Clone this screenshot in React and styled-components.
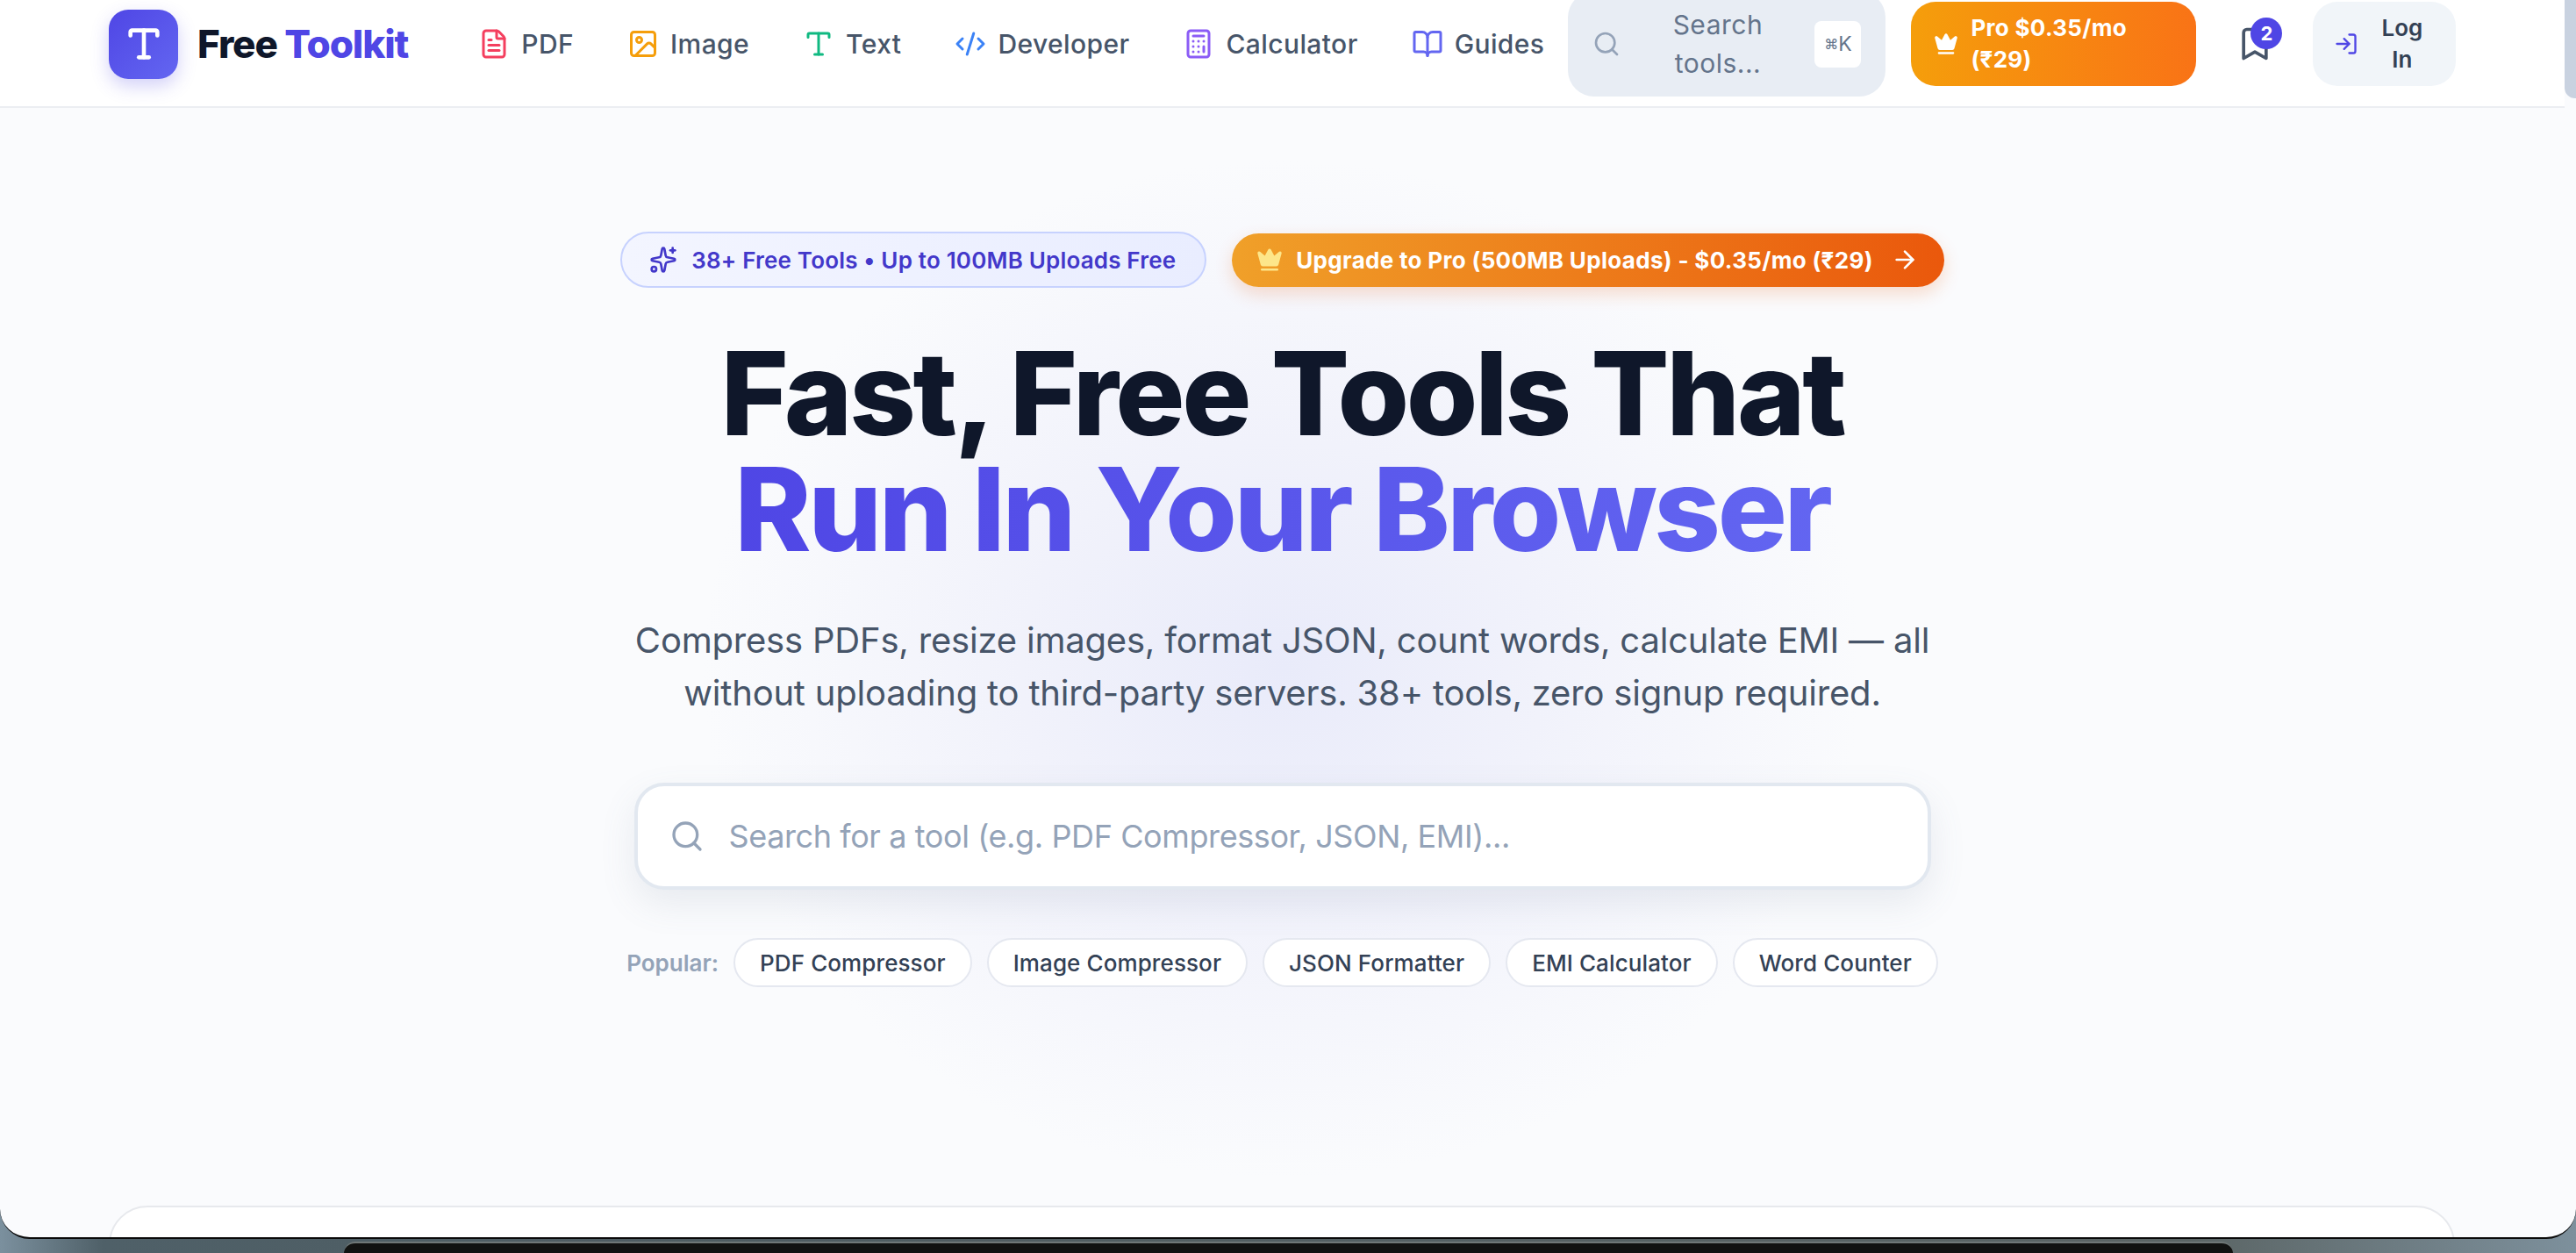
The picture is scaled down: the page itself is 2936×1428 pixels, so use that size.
import React from 'react'
import styled, { createGlobalStyle } from 'styled-components'
import {
  ArrowRight,
  BookOpen,
  Bookmark,
  Calculator,
  CodeXml,
  Crown,
  FileText,
  Image,
  LogIn,
  Search,
  Sparkles,
  Type,
} from 'lucide-react'

const GlobalStyle = createGlobalStyle`
  * { box-sizing: border-box; }
  html, body { margin: 0; padding: 0; }
  body {
    font-family: Inter, "Noto Sans", "DejaVu Sans", sans-serif;
    background: #5a6a70;
  }
`

const Desktop = styled.div`
  height: 1428px;
  overflow: hidden;
  background: linear-gradient(90deg, #7b909e 0%, #4f6068 4%, #4d5b60 30%, #5a6464 85%, #7d909c 100%);
`

const BrowserWindow = styled.div`
  display: flex;
  height: 1412px;
  overflow: hidden;
  background: #fafbfd;
  border-bottom: 2px solid #0a0a0a;
  border-radius: 0 0 34px 34px;
`

const Dock = styled.div`
  width: 2153px;
  height: 13px;
  margin: 3px 0 0 392px;
  background: #111211;
  border-top: 2px solid #6f7777;
  border-radius: 26px 26px 0 0;
`

const Content = styled.div`
  flex: 1;
  min-width: 0;
  display: flex;
  flex-direction: column;
`

const ScrollTrack = styled.div`
  width: 13px;
`

const ScrollThumb = styled.div`
  height: 112px;
  background: #c9d2e0;
  border-radius: 0 0 0 12px;
`

const Header = styled.header`
  height: 123px;
  flex-shrink: 0;
  padding: 0 125px 21px 124px;
  display: flex;
  align-items: center;
  background: #fff;
  border-bottom: 2px solid #eceef2;
`

const Brand = styled.a`
  display: flex;
  align-items: center;
  gap: 22px;
  margin-right: 80px;
`

const LogoMark = styled.div`
  width: 79px;
  height: 79px;
  border-radius: 22px;
  display: flex;
  align-items: center;
  justify-content: center;
  color: #fff;
  background: linear-gradient(135deg, #4f46e5, #6366f1);
  box-shadow: 0 8px 20px rgba(79, 70, 229, 0.25);
`

const BrandName = styled.span`
  font-size: 44px;
  font-weight: 800;
  letter-spacing: -1.1px;
  color: #0f172a;
  white-space: nowrap;
`

const BrandAccent = styled.span`
  color: #4f46e5;
`

const Nav = styled.nav`
  display: flex;
  align-items: center;
  gap: 61px;
  margin-right: 27px;
`

const NavItem = styled.a`
  display: flex;
  align-items: center;
  gap: 13px;
  font-size: 30px;
  font-weight: 500;
  letter-spacing: 0.4px;
  color: #475569;
  white-space: nowrap;
  svg {
    color: ${(p) => p.$tint};
  }
`

const SearchButton = styled.button`
  width: 362px;
  height: 120px;
  flex-shrink: 0;
  padding: 0 28px;
  display: flex;
  align-items: center;
  gap: 16px;
  border: 0;
  border-radius: 30px;
  background: #e8edf4;
  font: inherit;
  color: #94a3b8;
  margin-right: 29px;
`

const SearchLabel = styled.span`
  flex: 1;
  font-size: 30px;
  line-height: 44px;
  letter-spacing: 0.5px;
  color: #64748b;
  text-align: center;
  width: min-content;
`

const Kbd = styled.kbd`
  width: 53px;
  height: 53px;
  flex-shrink: 0;
  display: flex;
  align-items: center;
  justify-content: center;
  border-radius: 8px;
  background: #fff;
  font-family: Inter, "DejaVu Sans", sans-serif;
  font-size: 23px;
  color: #64748b;
`

const KbdSymbol = styled.span`
  font-size: 16px;
`

const ProButton = styled.button`
  width: 325px;
  height: 96px;
  flex-shrink: 0;
  padding: 0 26px;
  display: flex;
  align-items: center;
  gap: 14px;
  border: 0;
  border-radius: 28px;
  background: linear-gradient(90deg, #f59e0b, #f97316);
  color: #fff;
  font: inherit;
  font-size: 26px;
  font-weight: 700;
  line-height: 36px;
  letter-spacing: 0.3px;
  text-align: left;
  margin-right: 45px;
  svg {
    flex-shrink: 0;
    fill: currentColor;
  }
`

const BookmarkButton = styled.div`
  position: relative;
  width: 44px;
  height: 44px;
  flex-shrink: 0;
  color: #475569;
  margin-right: 44px;
`

const Badge = styled.span`
  position: absolute;
  top: -8px;
  right: -9px;
  width: 36px;
  height: 36px;
  border-radius: 50%;
  display: flex;
  align-items: center;
  justify-content: center;
  background: #4f46e5;
  color: #fff;
  font-size: 22px;
  font-weight: 700;
`

const LoginButton = styled.button`
  width: 163px;
  height: 96px;
  flex-shrink: 0;
  padding: 0 24px;
  display: flex;
  align-items: center;
  gap: 12px;
  border: 0;
  border-radius: 28px;
  background: #f1f5f9;
  color: #334155;
  font: inherit;
  font-size: 26px;
  font-weight: 600;
  line-height: 36px;
  svg {
    flex-shrink: 0;
    color: #4f46e5;
  }
`

const LoginLabel = styled.span`
  flex: 1;
  text-align: center;
`

const Main = styled.main`
  flex: 1;
  min-height: 0;
  padding-top: 141px;
  display: flex;
  flex-direction: column;
  align-items: center;
  background: radial-gradient(ellipse 660px 580px at 50% 640px, #e9ebfa 0%, #f1f2fb 45%, rgba(250, 251, 253, 0) 100%);
  & > * {
    flex-shrink: 0;
  }
`

const PillRow = styled.div`
  height: 64px;
  display: flex;
  align-items: center;
  gap: 29px;
`

const FreePill = styled.div`
  height: 64px;
  padding: 0 33px 0 31px;
  display: flex;
  align-items: center;
  gap: 16px;
  border: 2px solid #c7d2fe;
  border-radius: 32px;
  background: linear-gradient(90deg, #f3f5ff, #e9edff);
  color: #4338ca;
  font-size: 26px;
  font-weight: 600;
  letter-spacing: 0.18px;
  white-space: nowrap;
`

const UpgradePill = styled.a`
  height: 61px;
  padding: 0 29px 0 28px;
  display: flex;
  align-items: center;
  gap: 15px;
  border-radius: 31px;
  background: linear-gradient(90deg, #f0a029, #ea580c);
  box-shadow: 0 8px 20px rgba(234, 88, 12, 0.2);
  color: #fff;
  font-size: 26px;
  font-weight: 700;
  letter-spacing: 0.32px;
  white-space: nowrap;
`

const CrownTint = styled.span`
  display: flex;
  color: #fde68a;
  svg {
    fill: currentColor;
  }
`

const ArrowWrap = styled.span`
  display: flex;
  margin-left: 5px;
`

const Title = styled.h1`
  margin: 54px 0 0;
  font-size: 132px;
  line-height: 132px;
  font-weight: 800;
  letter-spacing: -3.3px;
  color: #0f172a;
  text-align: center;
  white-space: nowrap;
`

const TitleAccent = styled.span`
  display: block;
  background: linear-gradient(90deg, #4f46e5, #6366f1);
  -webkit-background-clip: text;
  background-clip: text;
  color: transparent;
`

const Lead = styled.p`
  width: 1500px;
  margin: 54px 0 0;
  font-size: 40px;
  line-height: 60px;
  letter-spacing: -0.2px;
  color: #475569;
  text-align: center;
`

const SearchBox = styled.div`
  width: 1478px;
  height: 122px;
  margin-top: 72px;
  padding: 0 36px;
  display: flex;
  align-items: center;
  gap: 28px;
  border: 4px solid #e2e8f0;
  border-radius: 34px;
  background: #fff;
  box-shadow: 0 16px 40px rgba(100, 116, 139, 0.12);
  color: #94a3b8;
`

const Placeholder = styled.span`
  font-size: 36px;
  letter-spacing: -0.4px;
  color: #94a3b8;
`

const PopularRow = styled.div`
  margin-top: 55px;
  display: flex;
  align-items: center;
  gap: 17px;
  white-space: nowrap;
`

const PopularLabel = styled.span`
  font-size: 26px;
  font-weight: 600;
  color: #94a3b8;
`

const Chip = styled.a`
  height: 56px;
  padding: 0 28px;
  display: flex;
  align-items: center;
  border: 2px solid #e5e8f0;
  border-radius: 28px;
  background: #fff;
  color: #334155;
  font-size: 26px;
  font-weight: 500;
  letter-spacing: 0.1px;
`

const ToolsCard = styled.section`
  align-self: stretch;
  height: 300px;
  margin: 249px 125px 0 124px;
  background: #fff;
  border: 2px solid #e7e9ed;
  border-radius: 44px;
`

const navItems = [
  { label: 'PDF', icon: FileText, tint: '#f43f5e' },
  { label: 'Image', icon: Image, tint: '#f59e0b' },
  { label: 'Text', icon: Type, tint: '#10b981' },
  { label: 'Developer', icon: CodeXml, tint: '#3b82f6' },
  { label: 'Calculator', icon: Calculator, tint: '#8b5cf6' },
  { label: 'Guides', icon: BookOpen, tint: '#6366f1' },
]

const popular = ['PDF Compressor', 'Image Compressor', 'JSON Formatter', 'EMI Calculator', 'Word Counter']

export default function App() {
  return (
    <>
      <GlobalStyle />
      <Desktop>
        <BrowserWindow>
          <Content>
            <Header>
              <Brand>
                <LogoMark>
                  <Type size={46} strokeWidth={2.4} />
                </LogoMark>
                <BrandName>
                  Free <BrandAccent>Toolkit</BrandAccent>
                </BrandName>
              </Brand>
              <Nav>
                {navItems.map((item) => (
                  <NavItem key={item.label} $tint={item.tint}>
                    <item.icon size={36} strokeWidth={2} />
                    {item.label}
                  </NavItem>
                ))}
              </Nav>
              <SearchButton>
                <Search size={32} strokeWidth={2} />
                <SearchLabel>Search tools...</SearchLabel>
                <Kbd>
                  <KbdSymbol>⌘</KbdSymbol>K
                </Kbd>
              </SearchButton>
              <ProButton>
                <Crown size={28} strokeWidth={2} />
                <span>Pro $0.35/mo (₹29)</span>
              </ProButton>
              <BookmarkButton>
                <Bookmark size={44} strokeWidth={2} />
                <Badge>2</Badge>
              </BookmarkButton>
              <LoginButton>
                <LogIn size={28} strokeWidth={2} />
                <LoginLabel>Log In</LoginLabel>
              </LoginButton>
            </Header>
            <Main>
              <PillRow>
                <FreePill>
                  <Sparkles size={32} strokeWidth={2} />
                  38+ Free Tools • Up to 100MB Uploads Free
                </FreePill>
                <UpgradePill>
                  <CrownTint>
                    <Crown size={30} strokeWidth={2} />
                  </CrownTint>
                  Upgrade to Pro (500MB Uploads) - $0.35/mo (₹29)
                  <ArrowWrap>
                    <ArrowRight size={32} strokeWidth={2} />
                  </ArrowWrap>
                </UpgradePill>
              </PillRow>
              <Title>
                Fast, Free Tools That
                <TitleAccent>Run In Your Browser</TitleAccent>
              </Title>
              <Lead>
                Compress PDFs, resize images, format JSON, count words, calculate EMI — all without uploading to
                third-party servers. 38+ tools, zero signup required.
              </Lead>
              <SearchBox>
                <Search size={40} strokeWidth={2} />
                <Placeholder>Search for a tool (e.g. PDF Compressor, JSON, EMI)...</Placeholder>
              </SearchBox>
              <PopularRow>
                <PopularLabel>Popular:</PopularLabel>
                {popular.map((name) => (
                  <Chip key={name}>{name}</Chip>
                ))}
              </PopularRow>
              <ToolsCard />
            </Main>
          </Content>
          <ScrollTrack>
            <ScrollThumb />
          </ScrollTrack>
        </BrowserWindow>
        <Dock />
      </Desktop>
    </>
  )
}
